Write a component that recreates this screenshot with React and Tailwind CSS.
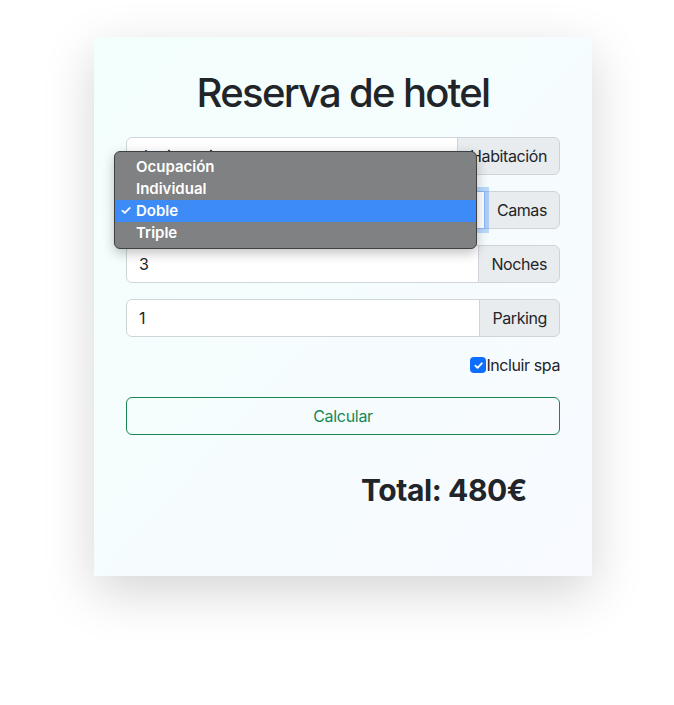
import React from 'react';

const font = { fontFamily: 'Inter, "Noto Sans", sans-serif' };

const Addon = ({ children }) => (
  <span className="flex items-center px-3 bg-[#e9ecef] border border-[#ced4da] rounded-r-md -ml-px text-[16px] tracking-[-0.4px] text-[#212529]">
    {children}
  </span>
);

const Row = ({ value, label, focus }) => (
  <div className="flex h-[38px]">
    <div
      className={
        focus
          ? 'flex-1 flex items-center px-3 bg-white border border-[#86b7fe] rounded-l-md shadow-[0_0_0_4px_rgba(13,110,253,0.25)] text-[16px] text-[#212529] relative z-10'
          : 'flex-1 flex items-center px-3 bg-white border border-[#ced4da] rounded-l-md text-[16px] text-[#212529]'
      }
    >
      {value}
    </div>
    <Addon>{label}</Addon>
  </div>
);

const options = ['Ocupación', 'Individual', 'Doble', 'Triple'];

export default function App() {
  return (
    <div className="min-h-screen bg-white pl-[94px] pt-[37px]" style={font}>
      <div className="w-[498px] h-[539px] px-8 pt-8 bg-gradient-to-br from-[#f3fffc] to-[#f8faff] shadow-[0_16px_48px_rgba(0,0,0,0.17)]">
        <h1 className="text-center text-[40px] leading-[48px] font-medium tracking-[-1.7px] text-[#212529] mb-5">
          Reserva de hotel
        </h1>

        {/* form */}
        <div className="relative flex flex-col gap-4">
          <Row value="Junior suite" label="Habitación" />
          <Row value="Doble" label="Camas" focus />
          <Row value="3" label="Noches" />
          <Row value="1" label="Parking" />

          <label className="flex justify-end items-center h-6 text-[16px] tracking-[-0.4px] text-[#212529]">
            <span className="w-4 h-4 rounded bg-[#0d6efd] flex items-center justify-center">
              <svg width="11" height="11" viewBox="0 0 12 12" fill="none">
                <path d="M2.5 6.2 5 8.6 9.6 3.6" stroke="white" strokeWidth="2" strokeLinecap="round" strokeLinejoin="round" />
              </svg>
            </span>
            Incluir spa
          </label>

          <button className="mt-1 h-[38px] w-full border border-[#198754] rounded-md text-[#198754] text-[16px] tracking-[-0.3px] bg-transparent">
            Calcular
          </button>

          <div className="flex justify-end pr-[33px] mt-[21px]">
            <span className="text-[30px] leading-[36px] font-bold tracking-[-0.4px] text-[#212529]">Total: 480€</span>
          </div>

          {/* open select menu */}
          <div className="absolute left-[-12px] top-[14px] w-[363px] h-[98px] pt-1 bg-[#7f8183] border border-[#3f4042] rounded-md shadow-[0_4px_12px_rgba(0,0,0,0.25)] z-20 overflow-hidden">
            {options.map((o) => (
              <div
                key={o}
                className={
                  o === 'Doble'
                    ? 'relative h-[22px] flex items-center pl-[21px] bg-[#3d8bf6] text-white text-[15px] font-semibold'
                    : 'relative h-[22px] flex items-center pl-[21px] text-white text-[15px] font-semibold'
                }
              >
                {o === 'Doble' && <span className="absolute left-[5px] text-[13px]">✓</span>}
                {o}
              </div>
            ))}
          </div>
        </div>
      </div>
    </div>
  );
}
